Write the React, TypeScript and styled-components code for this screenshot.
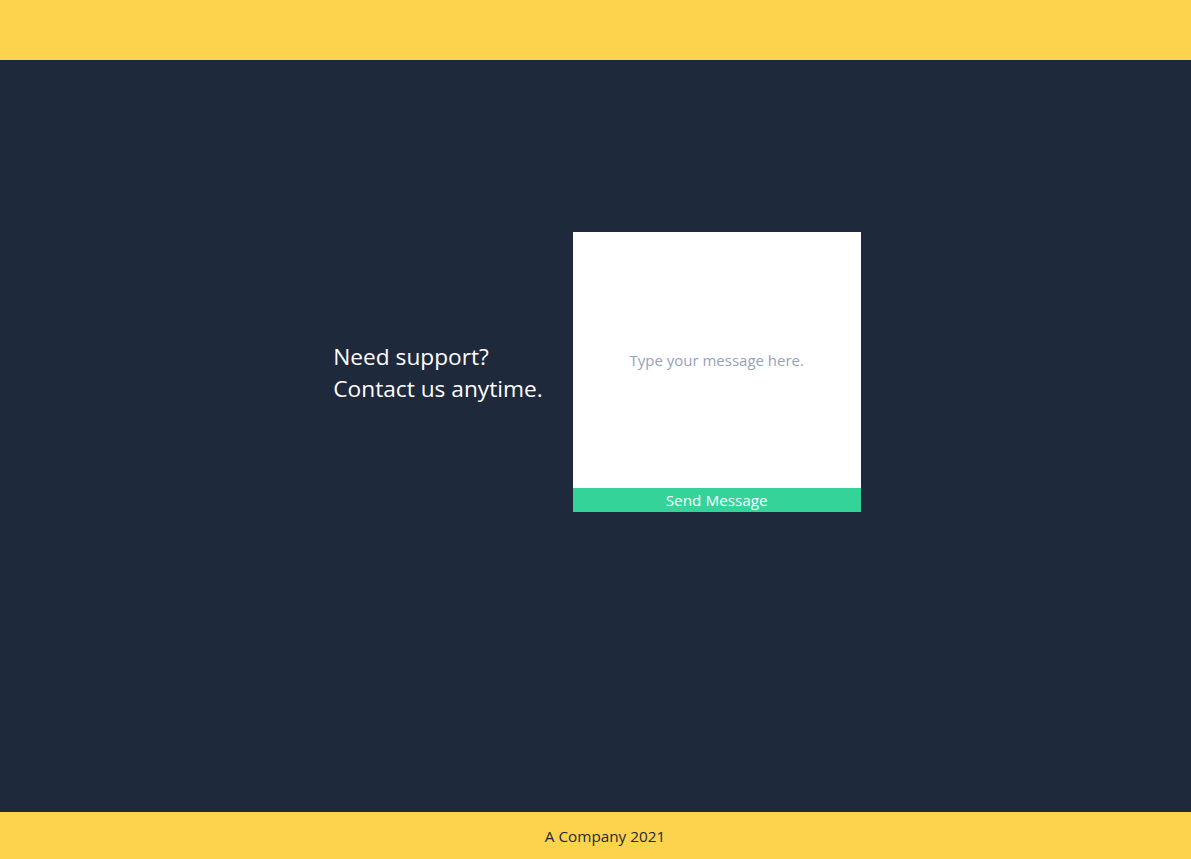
import React from "react";
import styled, { createGlobalStyle } from "styled-components";

const Global = createGlobalStyle`
  html, body { margin: 0; padding: 0; height: 100%; }
  body { font-family: "Open Sans", "Noto Sans", sans-serif; background: #1E293B; }
  #root { height: 100%; }
`;

const Page = styled.div`
  display: flex;
  flex-direction: column;
  height: 859px;
`;

const Header = styled.header`
  height: 60px;
  background: #FCD34D;
  flex-shrink: 0;
`;

const Main = styled.main`
  flex: 1;
  background: #1E293B;
  display: flex;
  align-items: center;
  justify-content: center;
  gap: 30px;
  padding: 0 0 128px 3px;
`;

const Tagline = styled.p`
  margin: 0;
  padding-top: 2px;
  color: #ffffff;
  font-size: 22.7px;
  line-height: 32px;
`;

const Card = styled.form`
  width: 288px;
  height: 280px;
  display: flex;
  flex-direction: column;
  background: #ffffff;
`;

const Message = styled.textarea`
  flex: 1;
  border: none;
  outline: none;
  resize: none;
  padding: 118px 16px 0;
  box-sizing: border-box;
  font-family: inherit;
  font-size: 15px;
  line-height: 20px;
  text-align: center;
  color: #1E293B;
  &::placeholder { color: #94A3B8; }
`;

const SendButton = styled.button`
  height: 24px;
  border: none;
  background: #34D399;
  color: #ffffff;
  font-family: inherit;
  font-size: 15.3px;
  padding: 0;
  cursor: pointer;
`;

const Footer = styled.footer`
  height: 47px;
  background: #FCD34D;
  display: flex;
  align-items: center;
  justify-content: center;
  padding-left: 19px;
  color: #1E293B;
  font-size: 15.3px;
  flex-shrink: 0;
`;

export default function App() {
  return (
    <>
      <Global />
      <Page>
        <Header />
        <Main>
          <Tagline>
            Need support?
            <br />
            Contact us anytime.
          </Tagline>
          <Card onSubmit={(e) => e.preventDefault()}>
            <Message placeholder="Type your message here." />
            <SendButton type="submit">Send Message</SendButton>
          </Card>
        </Main>
        <Footer>A Company 2021</Footer>
      </Page>
    </>
  );
}
